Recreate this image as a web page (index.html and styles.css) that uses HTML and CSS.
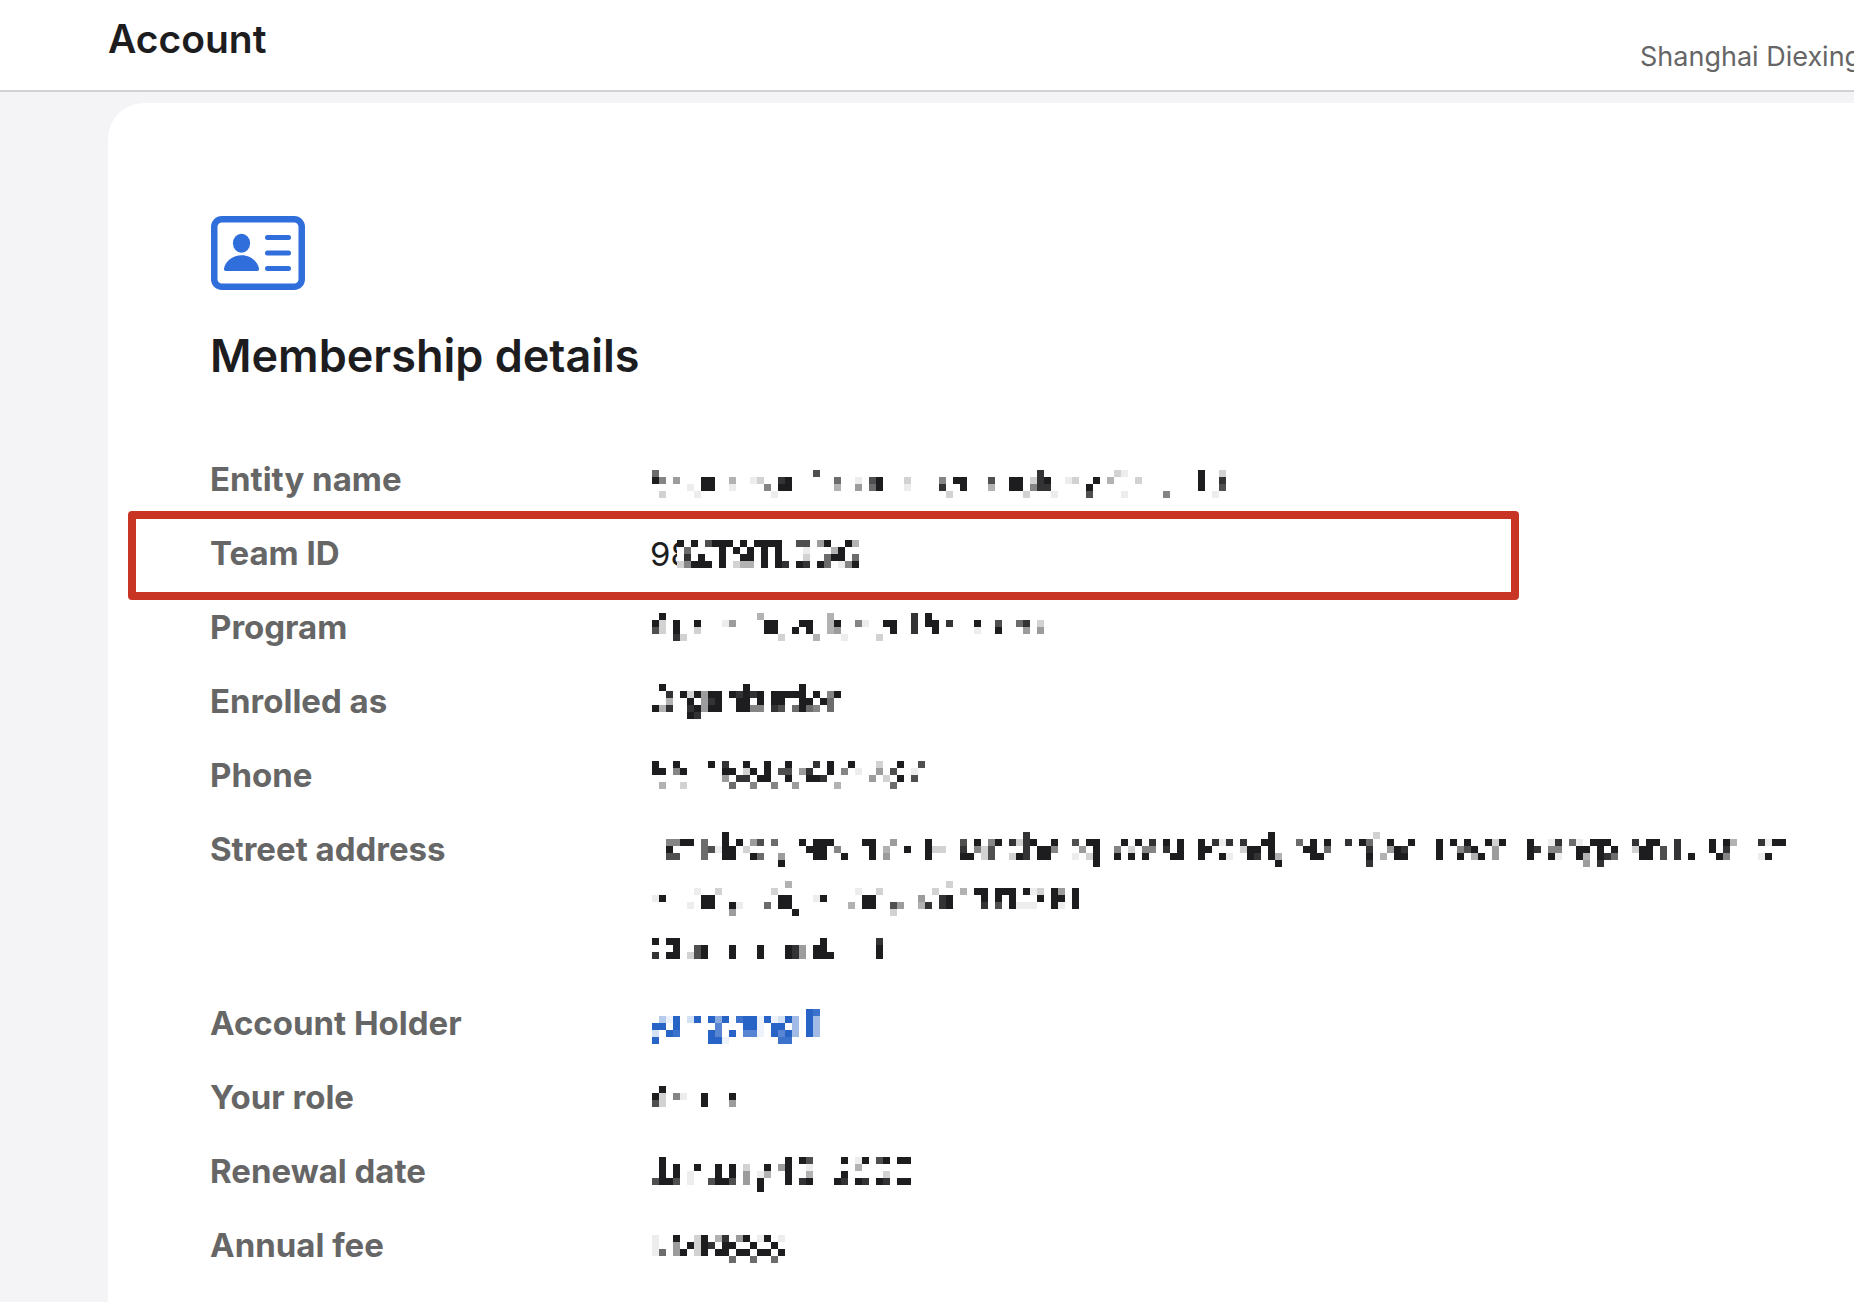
FILE: index.html
```
<!DOCTYPE html>
<html lang="en">
<head>
    <meta charset="UTF-8">
    <title>Account</title>
    <link rel="stylesheet" href="styles.css">
</head>
<body>
    <header class="header">
        <h1 class="title">Account</h1>
        <span class="company">Shanghai Diexing</span>
    </header>
    <main class="card">
        <svg class="card-icon" width="96" height="74" viewBox="-1 0 96 74" aria-hidden="true">
            <rect x="3.25" y="3.25" width="87.5" height="67.5" rx="7.5" fill="none" stroke="currentColor" stroke-width="6.5"/>
            <ellipse cx="30.5" cy="27.3" rx="8.6" ry="9.5" fill="currentColor"/>
            <path d="M15 55C13.500 55 12.700 54 13 52.500C14.500 45 22 39.300 30.500 39.300S46.500 45 48 52.500C48.300 54 47.500 55 46 55Z" fill="currentColor"/>
            <path d="M56.500 21.500H77.500M56.500 37H77.500M56.500 52.500H77.500" stroke="currentColor" stroke-width="5" stroke-linecap="round"/>
        </svg>
        <h2 class="subtitle">Membership details</h2>
        <dl class="details">
            <div class="row">
                <dt>Entity name</dt>
                <dd><svg class="mosaic" data-top="15" data-cells="0:69 1:0502 3:04 5:001 6:0001 7:099 8:099 11:031 14:01 15:02 16:005 17:0001 18:089 19:099 23:7 26:063 29:014 31:076 32:099 36:021 41:058 42:0002 43:09 44:099 48:073 51:099 52:099 53:0002 54:025 55:888 56:098 57:0001 59:01 60:02 62:0097 63:09 65:03 66:2 67:1001 69:02 73:0005 78:999 80:0001 81:287"></svg></dd>
            </div>
            <div class="row marked">
                <dt>Team ID</dt>
                <dd><span class="clip">98</span><svg class="mosaic" data-top="11" data-cells="0:9002 1:0685 2:9009 3:0009 3:009 4:7009 5:9 6:9999 7:9 8:0902 9:9093 10:0993 11:9 12:9999 13:9 14:9999 15:0008 17:7009 18:7128 20:4009 21:9066 22:039 23:0991 24:9005 25:3069"></svg></dd>
            </div>
            <div class="row">
                <dt>Program</dt>
                <dd><svg class="mosaic" data-top="10" data-cells="0:097 1:922 3:0998 4:0002 6:092 10:01 11:04 15:3 16:099 17:099 18:0002 20:009 21:09 22:099 23:0003 25:333 26:094 27:0001 29:05 30:01 32:0002 33:09 34:099 37:888 39:99 40:099 42:08 46:091 49:079 52:06 53:084 55:024"></svg></dd>
            </div>
            <div class="row">
                <dt>Enrolled as</dt>
                <dd><svg class="mosaic" data-top="7" data-cells="0:0009 1:9003 2:0838 4:09 5:02989 6:09098 7:0444 8:0989 9:0999 11:09 12:0899 13:9999 14:0805 15:0995 17:0998 18:0997 19:09 20:0906 21:9999 22:0096 23:0905 24:009 25:0566 26:09"></svg></dd>
            </div>
            <div class="row">
                <dt>Phone</dt>
                <dd><svg class="mosaic" data-top="10" data-cells="0:99 1:0903 3:95 4:0902 8:9 10:894 11:0906 12:008 13:928 14:0905 15:009 16:999 17:0005 18:07 19:979 20:0004 21:04 22:089 23:809 24:008 25:99 26:0003 27:05 28:9 29:01 31:004 32:24 33:002 34:0706 35:909 37:017 38:7"></svg></dd>
            </div>
            <div class="row">
                <dt>Street address</dt>
                <dd>
                    <svg class="mosaic" data-top="7" data-cells="2:0597 3:0507 4:09 5:09 7:0666 8:007 9:001 10:9999 11:0099 12:09 13:002 14:0409 15:0706 17:06 18:00049 21:09 22:009 23:0999 24:0999 25:09 26:005 27:0009 30:09 31:0999 33:0034 34:04 36:009 39:0999 40:002 41:002 44:0789 45:0009 46:095 47:0022 48:0577 49:09 51:0802 52:0209 53:8888 54:09 55:0099 56:0099 57:095 60:0701 61:004 62:0902 63:09999 66:0059 67:09 68:0029 69:09 70:0059 71:085 73:098 74:0009 75:0999 78:0999 79:009 80:08 81:0109 82:0801 84:082 85:0099 86:0098 87:09 88:9999 89:00039 92:06 93:009 94:0999 95:0009 96:096 99:08 101:09 102:06898 103:2 104:0003 105:094 106:0099 107:0089 108:09 112:0999 114:09 115:0059 116:097 117:0093 118:0009 119:09 120:0244 121:09 125:0999 126:008 128:0159 129:0851 131:06 132:0199 133:00934 134:09 135:09998 136:0908 137:0096 140:082 141:0099 142:0999 143:09 144:0077 146:0888 148:0009 151:099 152:0009 153:0985 154:03 158:0801 159:0109 160:09 161:09"></svg>
                    <svg class="mosaic" data-top="6" data-cells="0:001 1:009 5:0001 6:01 7:0099 8:0099 9:02 11:00094 12:0001 16:0006 17:02 18:0099 19:3099 20:00009 23:001 24:009 28:0003 29:01 30:0099 31:0099 32:02 34:00072 35:0004 38:0043 39:0008 40:02 41:0088 42:2099 44:03 46:09 47:0998 49:0997 50:09 51:0999 52:0001 53:0901 54:0101 55:029 57:0999 58:0491 60:0999"></svg>
                    <svg class="mosaic" data-top="13" data-cells="0:908 2:909 3:999 5:002 6:077 7:099 11:099 15:099 19:099 20:088 21:044 23:099 24:999 25:009 32:899"></svg>
                </dd>
            </div>
            <div class="row">
                <dt>Account Holder</dt>
                <dd><a class="holder" href="#" aria-label="Account Holder"><svg class="mosaic" data-top="10" data-cells="0:00929 1:039 2:0109 3:0998 5:02 6:09 8:09099 9:05779 10:09001 11:0009 12:08 13:0997 14:0997 15:0111 16:09 17:0199 18:02978 19:09098 20:0444 22:9999 23:8444"></svg></a></dd>
            </div>
            <div class="row">
                <dt>Your role</dt>
                <dd><svg class="mosaic" data-top="13" data-cells="0:097 1:922 3:05 4:01 7:099 11:094"></svg></dd>
            </div>
            <div class="row">
                <dt>Renewal date</dt>
                <dd><svg class="mosaic" data-top="10" data-cells="0:0007 1:9999 2:0009 3:0997 5:0011 6:09 8:0007 9:0999 10:0009 11:0997 13:0244 15:00199 16:093 18:04 19:9999 21:9008 22:7139 26:0009 27:9098 29:1309 30:9008 32:7009 33:9028 35:9009 36:9009"></svg></dd>
            </div>
            <div class="row">
                <dt>Annual fee</dt>
                <dd><svg class="mosaic" data-top="14" data-cells="0:111 1:006 3:944 4:009 5:09 6:222 7:999 8:08 9:309 10:899 11:0906 12:409 13:909 14:0906 15:109 16:909 17:0906 18:109"></svg></dd>
            </div>
        </dl>
    </main>
    <script src="mosaic.js"></script>
</body>
</html>
```
FILE: styles.css
```
html,
body,
h1,
h2,
dl,
dd {
    margin: 0;
    padding: 0;
}

body {
    min-height: 100vh;
    display: flex;
    flex-direction: column;
    overflow: hidden;
    background: #f4f4f7;
    color: #1d1d1f;
    font-family: Inter, "Liberation Sans", sans-serif;
}

.header {
    display: flex;
    justify-content: space-between;
    align-items: flex-end;
    padding: 15px 0 17px 108px;
    border-bottom: 2px solid #d2d2d4;
    background: #fff;
}

.title {
    align-self: flex-start;
    padding-bottom: 10px;
    font-size: 39px;
    line-height: 48px;
    font-weight: 600;
}

.company {
    width: 214px;
    color: #666;
    font-size: 27px;
    line-height: 32px;
    white-space: nowrap;
}

.card {
    flex: 1;
    margin: 11px 0 0 108px;
    padding: 113px 0 32px 102px;
    border-top-left-radius: 36px;
    background: #fff;
}

.card-icon {
    display: block;
    color: #2f6edb;
}

.subtitle {
    margin: 36px 0 69px;
    font-size: 45px;
    line-height: 60px;
    font-weight: 600;
}

.details {
    display: flex;
    flex-direction: column;
    gap: 24px;
}

.row {
    display: grid;
    grid-template-columns: 440px 1fr;
    position: relative;
    font-size: 33px;
    line-height: 50px;
}

.row dt {
    color: #666;
    font-weight: 700;
    line-height: 48px;
}

.row dd {
    padding-left: 2px;
}

/* red frame over the team id */
.marked::after {
    content: "";
    position: absolute;
    box-sizing: border-box;
    top: -18px;
    bottom: -21px;
    left: -82px;
    width: 75vw;
    border: 8px solid #c93524;
    border-radius: 4px;
}

.marked dd {
    display: flex;
    padding-left: 0;
}

.clip {
    width: 27px;
    overflow: hidden;
}

.mosaic {
    display: block;
    height: 50px;
}

.holder {
    display: inline-block;
    color: #2863c6;
    vertical-align: top;
}
```
FILE: mosaic.js
```
// data-cells: "column:shades", shades run top to bottom, 0 (empty) to 9 (solid)
var SIZE = 7;
var SHADES = [0, 0.08, 0.2, 0.34, 0.44, 0.54, 0.65, 0.78, 0.9, 1];
var NS = "http://www.w3.org/2000/svg";
var list = document.querySelectorAll(".mosaic");

for (var i = 0; i < list.length; i++) {
    var svg = list[i];
    var top0 = Number(svg.getAttribute("data-top"));
    var columns = svg.getAttribute("data-cells").split(" ");
    var last = 0;

    for (var j = 0; j < columns.length; j++) {
        var part = columns[j].split(":");
        last = Number(part[0]);
        for (var k = 0; k < part[1].length; k++) {
            if (part[1][k] === "0") continue;
            var rect = document.createElementNS(NS, "rect");
            rect.setAttribute("x", last * SIZE);
            rect.setAttribute("y", top0 + k * SIZE);
            rect.setAttribute("width", SIZE);
            rect.setAttribute("height", SIZE);
            rect.setAttribute("fill", "currentColor");
            rect.setAttribute("fill-opacity", SHADES[part[1][k]]);
            svg.appendChild(rect);
        }
    }
    svg.setAttribute("width", (last + 1) * SIZE);
}
```
